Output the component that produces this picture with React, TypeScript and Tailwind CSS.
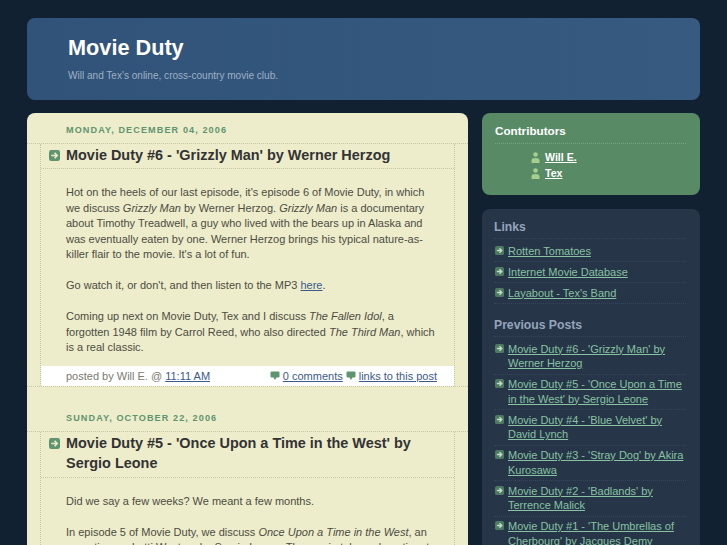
const Arrow = ({ size, box, arrow }: { size: number; box: string; arrow: string }) => (
  <svg width={size} height={size} viewBox="0 0 12 12" className="block shrink-0">
    <rect x="0" y="0" width="12" height="12" rx="2.5" fill={box} />
    <path d="M2.5 6H8.5M6 3L9 6L6 9" fill="none" stroke={arrow} strokeWidth="1.8" />
  </svg>
);

const Person = () => (
  <svg width="9" height="11" viewBox="0 0 9 11" className="block shrink-0">
    <circle cx="4.5" cy="2.5" r="2.3" fill="#a3d08c" />
    <path d="M0.5 11V8.5C0.5 6.8 2 6 4.5 6S8.5 6.8 8.5 8.5V11Z" fill="#a3d08c" />
  </svg>
);

const Bubble = () => (
  <svg width="10" height="10" viewBox="0 0 10 10" className="block shrink-0">
    <path d="M1.5 0.5H8.5Q9.5 0.5 9.5 1.5V5.5Q9.5 6.5 8.5 6.5H6.5L5 9L3.5 6.5H1.5Q0.5 6.5 0.5 5.5V1.5Q0.5 0.5 1.5 0.5Z" fill="#5f9470" />
  </svg>
);

const A = ({ children }: { children: React.ReactNode }) => (
  <a href="#" className="text-[#3c5a8c] underline">{children}</a>
);

const Post = ({ date, title, body, footer }: { date: string; title: string; body: React.ReactNode; footer?: boolean }) => (
  <section>
    <h2 className="pl-[39px] pt-[11px] pb-[6px] text-[9.1px] leading-[13px] font-bold uppercase tracking-[1.1px] text-[#5f9470]">{date}</h2>
    <div className="border-y border-dotted border-[#c6c6a2]">
      <div className="mx-[13px] border-x border-dotted border-[#c6c6a2]">
        <h3 className="flex items-start gap-[6px] pl-[8px] pr-[12px] pt-[0.5px] pb-[3px] border-b border-dotted border-[#c6c6a2] text-[14.45px] leading-[20.5px] font-bold text-[#333333]">
          <span className="pt-[5px]"><Arrow size={11} box="#5f9470" arrow="#edeccb" /></span>
          <span>{title}</span>
        </h3>
        <div className="pl-[25px] pr-[15px] pt-[16px] pb-[10px] text-[11px] leading-[15.55px] text-[#4c4c42]">{body}</div>
        {footer && (
          <div className="bg-white flex justify-between pr-[17px] pl-[25px] h-[20px] items-center text-[11px] text-[#7b7b70] leading-[15px]">
            <span>posted by Will E. @ <A>11:11 AM</A></span>
            <span className="flex items-center gap-[3px]">
              <Bubble /><A>0 comments</A><Bubble /><A>links to this post</A>
            </span>
          </div>
        )}
      </div>
    </div>
  </section>
);

const SideItem = ({ children }: { children: React.ReactNode }) => (
  <li className="flex gap-[4px] pl-[1px] pt-[2.5px] pb-[3px] border-b border-dotted border-[#35465a] text-[11px] leading-[14.5px] text-[#88c2a2]">
    <span className="pt-[2px]"><Arrow size={9} box="#4e7a62" arrow="#bfe0c6" /></span>
    <a href="#" className="underline">{children}</a>
  </li>
);

const posts = [
  "Movie Duty #6 - 'Grizzly Man' by Werner Herzog",
  "Movie Duty #5 - 'Once Upon a Time in the West' by Sergio Leone",
  "Movie Duty #4 - 'Blue Velvet' by David Lynch",
  "Movie Duty #3 - 'Stray Dog' by Akira Kurosawa",
  "Movie Duty #2 - 'Badlands' by Terrence Malick",
  "Movie Duty #1 - 'The Umbrellas of Cherbourg' by Jacques Demy",
];

export default function App() {
  return (
    <div className="h-[545px] overflow-hidden bg-[#122132] px-[27px] pt-[18px] font-['Liberation_Sans',Arial,sans-serif]">
      <header className="h-[82px] rounded-[8px] bg-gradient-to-r from-[#31537a] to-[#365a80] pl-[41px] pt-[16px]">
        <h1 className="text-[21.7px] leading-[27px] font-bold text-white">Movie Duty</h1>
        <p className="mt-[8px] text-[10.05px] leading-[14px] text-[#9fb0c3]">Will and Tex's online, cross-country movie club.</p>
      </header>
      <div className="flex gap-[14px] mt-[13px] items-start">
        <main className="w-[441px] h-[500px] shrink-0 rounded-t-[8px] bg-[#edeccb]">
          <Post
            date="Monday, December 04, 2006"
            title="Movie Duty #6 - 'Grizzly Man' by Werner Herzog"
            footer
            body={
              <>
                Hot on the heels of our last episode, it's episode 6 of Movie Duty, in which we discuss <em>Grizzly Man</em> by Werner Herzog. <em>Grizzly Man</em> is a documentary about Timothy Treadwell, a guy who lived with the bears up in Alaska and was eventually eaten by one. Werner Herzog brings his typical nature-as-killer flair to the movie. It's a lot of fun.
                <br /><br />
                Go watch it, or don't, and then listen to the MP3 <A>here</A>.
                <br /><br />
                Coming up next on Movie Duty, Tex and I discuss <em>The Fallen Idol</em>, a forgotten 1948 film by Carrol Reed, who also directed <em>The Third Man</em>, which is a real classic.
              </>
            }
          />
          <div className="h-[14px]" />
          <Post
            date="Sunday, October 22, 2006"
            title="Movie Duty #5 - 'Once Upon a Time in the West' by Sergio Leone"
            body={
              <>
                Did we say a few weeks? We meant a few months.
                <br /><br />
                In episode 5 of Movie Duty, we discuss <em>Once Upon a Time in the West</em>, an operatic spaghetti Western by Sergio Leone. The movie takes a long time to get going but it is worth it.
              </>
            }
          />
        </main>
        <aside className="w-[218px] shrink-0">
          <div className="h-[82px] rounded-[8px] bg-[#588a66] pl-[13px] pr-[14px] pt-[11px]">
            <h2 className="pb-[5px] border-b border-dotted border-[#76a583] text-[11.7px] leading-[14px] font-bold text-white">Contributors</h2>
            <ul className="mt-[5px] pl-[36px] text-[10.6px] leading-[16px] font-bold text-white">
              <li className="flex items-center gap-[5px]"><Person /><a href="#" className="underline">Will E.</a></li>
              <li className="flex items-center gap-[5px]"><Person /><a href="#" className="underline">Tex</a></li>
            </ul>
          </div>
          <div className="mt-[14px] h-[400px] rounded-t-[8px] bg-[#263648] pl-[12px] pr-[14px] pt-[11px]">
            <h2 className="pb-[4px] border-b border-dotted border-[#35465a] text-[12.2px] leading-[14px] font-bold text-[#95a5ba]">Links</h2>
            <ul className="pt-[2px]">
              <SideItem>Rotten Tomatoes</SideItem>
              <SideItem>Internet Movie Database</SideItem>
              <SideItem>Layabout - Tex's Band</SideItem>
            </ul>
            <h2 className="mt-[14px] pb-[4px] border-b border-dotted border-[#35465a] text-[12.2px] leading-[14px] font-bold text-[#95a5ba]">Previous Posts</h2>
            <ul className="pt-[2px]">
              {posts.map((p) => <SideItem key={p}>{p}</SideItem>)}
            </ul>
          </div>
        </aside>
      </div>
    </div>
  );
}
